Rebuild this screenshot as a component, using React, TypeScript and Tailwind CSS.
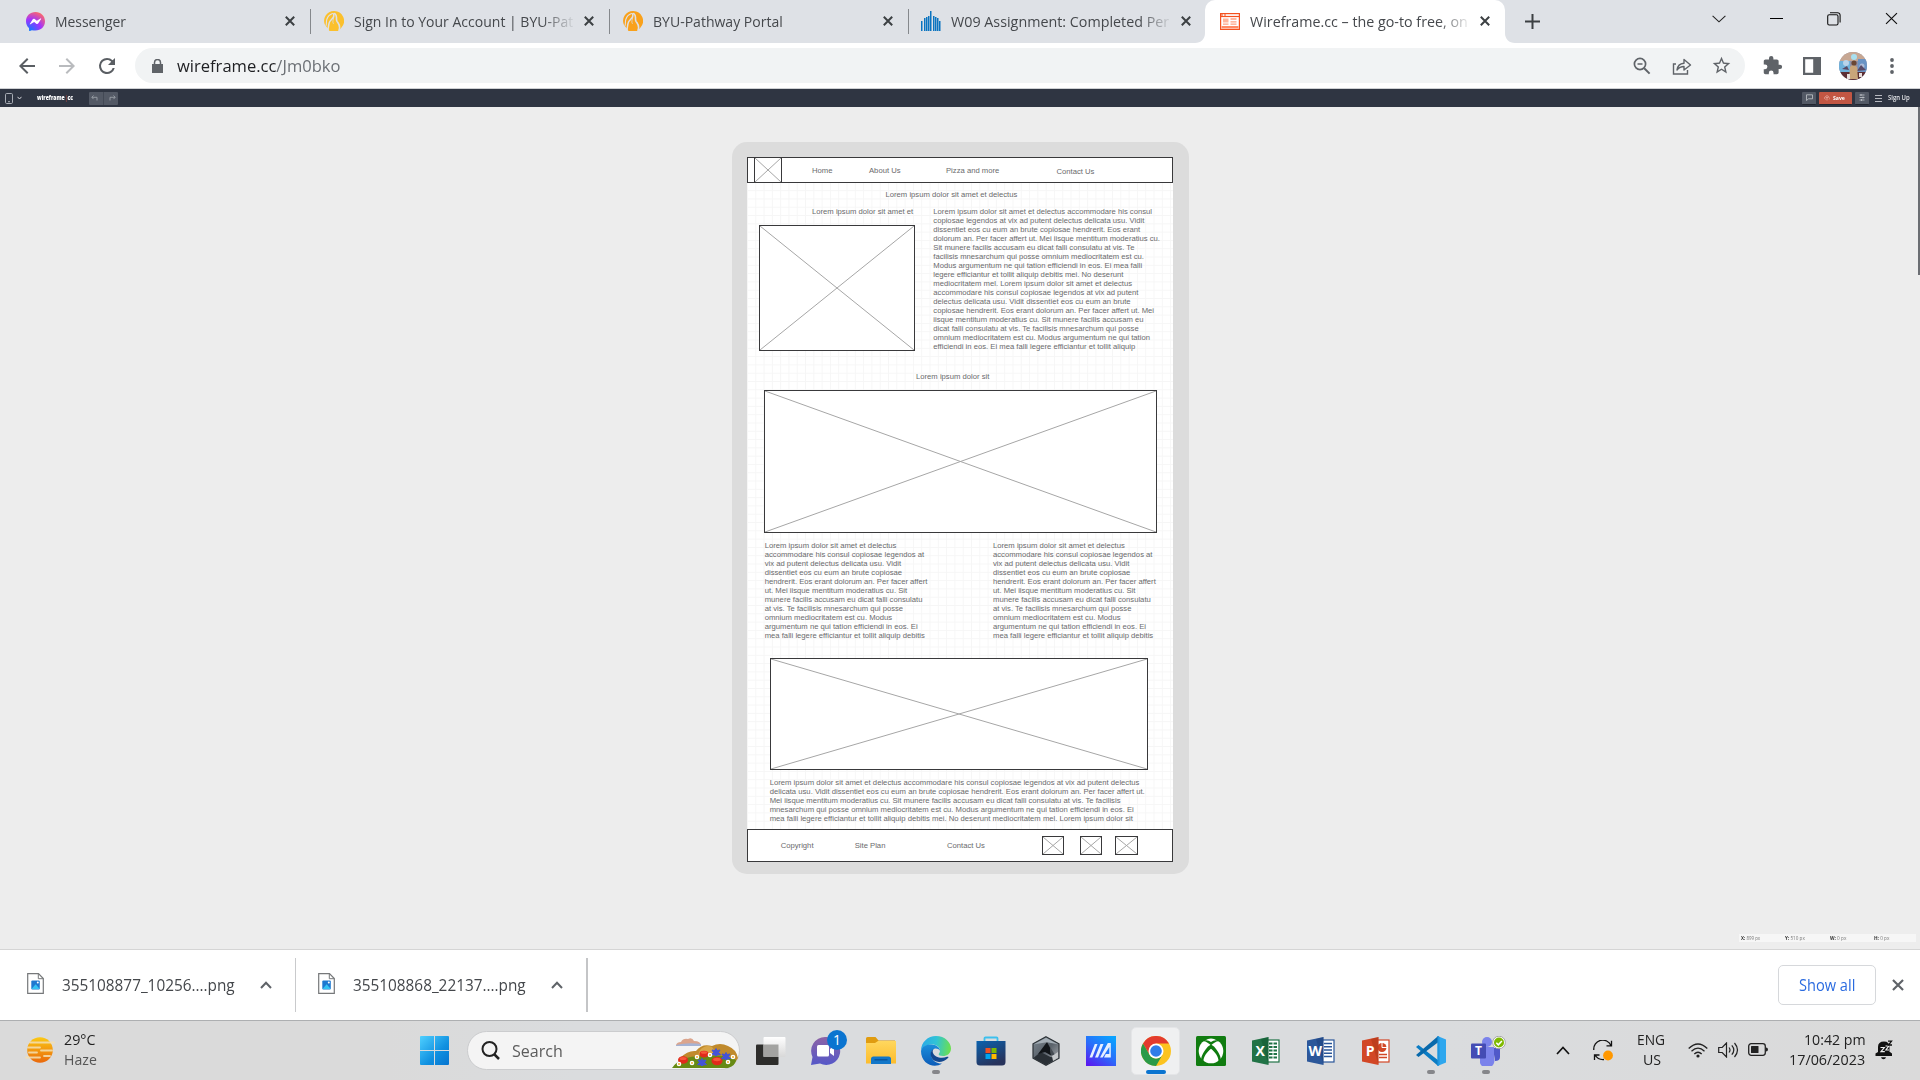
import React, { useLayoutEffect, useRef, useState } from "react";

/* Single line of text that is condensed or stretched to a given width. */
function Fit({ w, children, className = "" }: { w: number; children: React.ReactNode; className?: string }) {
  const ref = useRef<HTMLSpanElement>(null);
  const [k, setK] = useState(1);
  useLayoutEffect(() => {
    if (ref.current) setK(w / ref.current.offsetWidth);
  }, [w]);
  return (
    <span className={"block shrink-0 whitespace-nowrap " + className} style={{ width: w }}>
      <span ref={ref} className="inline-block origin-left" style={{ transform: `scaleX(${k})` }}>
        {children}
      </span>
    </span>
  );
}

/* ---------- tab strip ---------- */
function CloseX({ s = 10, c = "#3c4043", sw = 2 }: { s?: number; c?: string; sw?: number }) {
  return (
    <svg width={s} height={s} viewBox="0 0 10 10" className="shrink-0">
      <path d="M.8.8l8.4 8.4M9.2.8L.8 9.2" stroke={c} strokeWidth={sw} fill="none" />
    </svg>
  );
}

function MessengerIcon() {
  return (
    <svg width="19" height="19" viewBox="0 0 24 24">
      <defs>
        <radialGradient id="msg" cx=".2" cy="1" r="1.1">
          <stop offset="0" stopColor="#0a7cff" />
          <stop offset=".55" stopColor="#a033ff" />
          <stop offset="1" stopColor="#ff6a68" />
        </radialGradient>
      </defs>
      <path d="M12 0C5.200 0 0 4.900 0 11.600c0 3.500 1.400 6.500 3.800 8.600l.1 3.200c0 .5.500.8 1 .6l2.500-1.100c1.400.4 3 .6 4.600.6 6.800 0 12-4.900 12-11.700S18.800 0 12 0z" fill="url(#msg)" />
      <path d="M4.800 15l3.500-5.600c.6-.9 1.800-1.100 2.600-.5l2.800 2.100 4.700-2.900c.5-.3 1 .2.700.7l-3.500 5.500c-.5.900-1.800 1.100-2.600.5l-2.700-2.100-4.800 2.900c-.5.300-1-.2-.7-.6z" fill="#fff" />
    </svg>
  );
}

function PathwayIcon({ c }: { c: string }) {
  return (
    <svg width="20" height="20" viewBox="0 0 20 20">
      <path d="M10 0A9.900 9.900 0 0 1 17.500 16.500L14.500 20H5.500L4 17.500 1.200 14.500A9.900 9.900 0 0 1 10 0z" fill={c} />
      <g fill="none" stroke="#dee1e6" strokeLinecap="round">
        <path d="M8.500 2.600C6 3.500 3.800 5.500 2.800 8.500 2 11 3 13.500 1.500 16" strokeWidth="1.100" />
        <path d="M9.500 2.800C11.500 6 7 8 5.500 11c-1 2.200-1 4.500-1.500 8" strokeWidth="1.500" />
        <path d="M10.800 2.600C14 5 11.500 7.500 13 10.300c1.300 2.200 4 4.200 2 9" strokeWidth="1.600" />
        <path d="M9.800 6.500C9.500 9 8 10.500 9.300 12.500" strokeWidth=".7" />
      </g>
    </svg>
  );
}

function BarsIcon() {
  const h = [10, 13, 14, 15, 20, 15, 14, 13, 10];
  const x = [0, 3, 5, 7, 9, 12, 14, 16, 18];
  return (
    <svg width="20" height="20" viewBox="0 0 20 20">
      {h.map((v, i) => (
        <rect key={i} x={x[i]} y={20 - v} width="1.500" height={v} fill="#0a74c0" />
      ))}
    </svg>
  );
}

function WireframeIcon() {
  return (
    <svg width="20" height="17" viewBox="0 0 20 17">
      <rect x=".6" y=".6" width="18.800" height="15.800" fill="#fff" stroke="#f4511e" strokeWidth="1.200" />
      <path d="M1 3.500h18" stroke="#f4511e" strokeWidth="1.200" />
      <path d="M1 2h2M4 2h2" stroke="#f4511e" strokeWidth="1" />
      <rect x="3" y="5.500" width="5.500" height="4" fill="#ffb59b" />
      <path d="M10.500 6h6M10.500 8.800h6M3 11.200h5.500M10.500 11.200h6" stroke="#ffa182" strokeWidth="1.300" />
      <path d="M1.500 14.200h17" stroke="#ff8a65" strokeWidth="2.400" />
    </svg>
  );
}

function Tab({ icon, w, fit, title, sep }: { icon: React.ReactNode; w: string; fit: number; title: string; sep?: boolean }) {
  return (
    <div className={"flex h-full shrink-0 items-center pb-[1px] " + w}>
      <div className="flex w-[20px] justify-center">{icon}</div>
      <div className="ml-[10px] w-[220px] [mask-image:linear-gradient(to_right,#000_188px,transparent_222px)]">
        <Fit w={fit} className="text-[15px] leading-[22px] text-[#45484c]">{title}</Fit>
      </div>
      <div className="ml-[10px] flex w-[10px]">
        <CloseX />
      </div>
      {sep && <div className="ml-[15px] h-[25px] w-px bg-[#85888c]" />}
    </div>
  );
}

function TabStrip() {
  return (
    <div className="flex h-[43px] bg-[#dee1e6] text-[#3c4043]">
      <Tab w="ml-[25px] w-[299px]" fit={71.500} icon={<MessengerIcon />} title="Messenger" sep />
      <Tab w="w-[299px]" fit={219.500} icon={<PathwayIcon c="#fbc02d" />} title="Sign In to Your Account | BYU-Pat" sep />
      <Tab w="w-[298px]" fit={130} icon={<PathwayIcon c="#f9a11b" />} title="BYU-Pathway Portal" sep />
      <Tab w="w-[284px]" fit={218.500} icon={<BarsIcon />} title="W09 Assignment: Completed Per" />
      <div className="relative h-full w-[300px] shrink-0 rounded-t-[10px] bg-white pl-[15px]">
        <Tab w="w-[275px]" fit={218} icon={<WireframeIcon />} title="Wireframe.cc – the go-to free, on" />
        <svg width="10" height="10" className="absolute bottom-0 -left-[10px]"><path d="M10 0v10H0C6 10 10 6 10 0z" fill="#fff" /></svg>
        <svg width="10" height="10" className="absolute -right-[10px] bottom-0"><path d="M0 0v10h10C4 10 0 6 0 0z" fill="#fff" /></svg>
      </div>
      <div className="ml-[20px] flex items-center">
        <svg width="15" height="15" viewBox="0 0 15 15"><path d="M7.500 0v15M0 7.500h15" stroke="#3c4043" strokeWidth="2" /></svg>
      </div>
      <div className="ml-[172px] flex h-[37px] items-center">
        <svg width="14" height="8" viewBox="0 0 14 8"><path d="M.6.800l6.400 6 6.400-6" fill="none" stroke="#222" strokeWidth="1.100" /></svg>
        <div className="ml-[44px] h-px w-[13px] bg-black" />
        <svg width="14" height="14" viewBox="0 0 14 14" className="ml-[44px]">
          <rect x=".7" y="2.700" width="10.300" height="10.300" rx="1.500" fill="none" stroke="#111" strokeWidth="1.100" />
          <path d="M3 .700h7.500a2.500 2.500 0 0 1 2.600 2.500V10.500" fill="none" stroke="#111" strokeWidth="1.100" />
        </svg>
        <span className="ml-[44px]"><CloseX s={13} c="#111" sw={0.9} /></span>
      </div>
    </div>
  );
}

/* ---------- address bar ---------- */
function Toolbar() {
  return (
    <div className="flex h-[46px] items-center border-b border-[#cfd1d4] bg-white">
      <svg width="24" height="24" viewBox="0 0 24 24" className="ml-[15px]"><path d="M20 11H7.830l5.590-5.590L12 4l-8 8 8 8 1.410-1.410L7.830 13H20v-2z" fill="#5a5e63" /></svg>
      <svg width="24" height="24" viewBox="0 0 24 24" className="ml-[16px]"><path d="M12 4l-1.410 1.410L16.170 11H4v2h12.170l-5.580 5.590L12 20l8-8z" fill="#b9bbbe" /></svg>
      <svg width="24" height="24" viewBox="0 0 24 24" className="ml-[16px]"><path d="M17.650 6.350A7.960 7.960 0 0 0 12 4a8 8 0 1 0 7.730 10h-2.080A6 6 0 1 1 12 6c1.660 0 3.140.690 4.220 1.780L13 11h7V4l-2.350 2.350z" fill="#5a5e63" /></svg>
      <div className="ml-[16px] flex h-[35px] w-[1610px] items-center rounded-full bg-[#f1f3f4] pl-[17px]">
        <svg width="11" height="14" viewBox="0 0 11 14"><path d="M0 5h11v9H0z" fill="#5f6368" /><path d="M2.500 6V3.500a3 3 0 0 1 6 0V6" fill="none" stroke="#5f6368" strokeWidth="1.500" /></svg>
        <Fit w={163.500} className="ml-[14px] text-[17px] leading-[24px] text-[#6c7075]"><span className="text-[#202124]">wireframe.cc</span>/Jm0bko</Fit>
        <svg width="18" height="18" viewBox="0 0 18 18" className="ml-[1292px]" fill="none" stroke="#5f6368">
          <circle cx="7" cy="7" r="5.600" strokeWidth="1.700" /><path d="M11.200 11.200l5.400 5.400" strokeWidth="2" /><path d="M4.500 7h5" strokeWidth="1.500" />
        </svg>
        <svg width="20" height="18" viewBox="0 0 20 18" className="ml-[21px]" fill="none" stroke="#5f6368" strokeWidth="1.400">
          <path d="M4 7H1.500v10h14v-4" /><path d="M5 13c.5-4 3-6.500 7-6.800V2.500L18.500 8 12 13V9.500c-3 0-5 1-7 3.500z" strokeLinejoin="round" />
        </svg>
        <svg width="21" height="21" viewBox="0 0 24 24" className="ml-[19px]"><path d="M22 9.240l-7.190-.620L12 2 9.190 8.630 2 9.240l5.460 4.730L5.820 21 12 17.270 18.180 21l-1.630-7.030L22 9.240zM12 15.400l-3.760 2.270 1-4.280-3.320-2.880 4.380-.380L12 6.100l1.710 4.040 4.380.380-3.320 2.880 1 4.280L12 15.400z" fill="#5f6368" /></svg>
      </div>
      <svg width="21" height="21" viewBox="0 0 24 24" className="ml-[17px]"><path d="M20.500 11H19V7c0-1.100-.9-2-2-2h-4V3.500a2.500 2.500 0 0 0-5 0V5H4c-1.100 0-1.990.9-1.990 2v3.800H3.500a2.700 2.700 0 0 1 0 5.400H2V20c0 1.100.9 2 2 2h3.800v-1.500a2.700 2.700 0 0 1 5.400 0V22H17c1.100 0 2-.9 2-2v-4h1.500a2.500 2.500 0 0 0 0-5z" fill="#5f6368" /></svg>
      <svg width="18" height="18" viewBox="0 0 18 18" className="ml-[20px]"><path d="M0 0h18v18H0zM2.200 2.200v13.600h8V2.200z" fill="#5f6368" fillRule="evenodd" /></svg>
      <svg width="28" height="28" viewBox="0 0 28 28" className="ml-[18px]">
        <clipPath id="av"><circle cx="14" cy="14" r="14" /></clipPath>
        <g clipPath="url(#av)">
          <rect width="28" height="28" fill="#8f8fa6" />
          <rect width="28" height="9" fill="#c7a793" />
          <path d="M0 9h11v12H0z" fill="#6fb2dc" /><path d="M19 7h9v13h-9z" fill="#6a93c4" />
          <circle cx="15" cy="5" r="3" fill="#a8e0f0" /><circle cx="7" cy="11" r="3" fill="#b9d3ea" /><circle cx="23" cy="14" r="2.500" fill="#aebbd6" />
          <path d="M3 17l5-3 2 4zM18 19l4-6 5 5z" fill="#5a4a66" />
          <path d="M0 20h28v8H0z" fill="#5d2f35" />
          <path d="M11 15q3-4 7 0l1 12h-9z" fill="#c9a57a" /><circle cx="15" cy="11" r="2.600" fill="#6a4634" />
          <path d="M8 22h3v5H8zM20 21h3v4h-3z" fill="#e8e0de" />
        </g>
      </svg>
      <svg width="4" height="16" viewBox="0 0 4 16" className="ml-[23px]" fill="#5f6368"><circle cx="2" cy="2" r="1.900" /><circle cx="2" cy="8" r="1.900" /><circle cx="2" cy="14" r="1.900" /></svg>
    </div>
  );
}

/* ---------- wireframe editor ---------- */
function EditorBar() {
  return (
    <div className="flex h-[18px] items-center bg-[#2f3542] text-white">
      <svg width="8" height="11" viewBox="0 0 8 11" className="ml-[5px]"><rect x=".5" y=".5" width="7" height="10" rx="1.200" fill="none" stroke="#a9adb5" /><path d="M3 8.700h2" stroke="#a9adb5" /></svg>
      <svg width="5" height="4" viewBox="0 0 5 4" className="ml-[4px]"><path d="M.5.800L2.500 3 4.500.800" stroke="#d5d7db" fill="none" /></svg>
      <Fit w={36} className="ml-[15px] text-[6.500px] leading-[10px] font-extrabold">wireframe<span className="font-normal text-[#e2543d]">|</span>cc</Fit>
      <div className="ml-[16px] flex h-[13px] w-[29px] items-center justify-around rounded-[1px] bg-[#535965]">
        <svg width="7" height="6" viewBox="0 0 7 6"><path d="M2.500.500L.800 2.300l1.700 1.800M1 2.300h5V5.500" stroke="#9da1a9" fill="none" strokeWidth=".9" /></svg>
        <div className="h-full w-px bg-[#434955]" />
        <svg width="7" height="6" viewBox="0 0 7 6"><path d="M4.500.500L6.200 2.300 4.500 4.100M6 2.300H1V5.500" stroke="#9da1a9" fill="none" strokeWidth=".9" /></svg>
      </div>
      <div className="ml-[1684px] flex h-[13px] w-[14px] items-center justify-center rounded-[1px] border-b border-[#22262f] bg-[#535965]">
        <svg width="7" height="7" viewBox="0 0 7 7"><path d="M.500.800h6v4h-4L.500 6.500z" stroke="#c3c6cb" fill="none" strokeWidth=".8" /></svg>
      </div>
      <div className="ml-[3px] flex h-[13px] w-[33px] items-center rounded-[1px] border-b border-[#22262f] bg-[#c25643] pl-[5px]">
        <svg width="6" height="6" viewBox="0 0 6 6"><path d="M3 5.500V2M1.800 3L3 1.800 4.200 3M1.500 4.500a1.700 1.700 0 0 1 0-3 2 2 0 0 1 3.500 1 1.200 1.200 0 0 1 0 2" stroke="#efb5aa" fill="none" strokeWidth=".7" /></svg>
        <Fit w={12} className="ml-[3px] text-[6px] leading-[10px] font-bold">Save</Fit>
      </div>
      <div className="ml-[3px] flex h-[13px] w-[14px] items-center justify-center rounded-[1px] border-b border-[#22262f] bg-[#535965]">
        <svg width="6" height="7" viewBox="0 0 6 7"><path d="M.500 1h5M.500 3.500h5M.500 6h5M2 0v2M4 2.500v2M2.500 5v2" stroke="#c3c6cb" strokeWidth=".8" /></svg>
      </div>
      <svg width="7" height="7" viewBox="0 0 7 7" className="ml-[6px]"><path d="M0 .500h7M0 3.500h7M0 6.500h7" stroke="#c8cad0" strokeWidth=".9" /></svg>
      <Fit w={22} className="ml-[6px] text-[6.500px] leading-[10px] font-semibold text-[#e4e5e8]">Sign Up</Fit>
    </div>
  );
}

function ImageBox({ className }: { className: string }) {
  return (
    <div className={"absolute border border-[#39393b] bg-white " + className}>
      <svg width="100%" height="100%" viewBox="0 0 100 100" preserveAspectRatio="none" className="block">
        <path d="M0 0L100 100M100 0L0 100" stroke="#a6a6a6" strokeWidth="1" vectorEffect="non-scaling-stroke" />
      </svg>
    </div>
  );
}

function Note({ className, lines }: { className: string; lines: string[] }) {
  return (
    <div className={"absolute text-[7.680px] leading-[9px] whitespace-nowrap " + className}>
      {lines.map((l, i) => (
        <div key={i}>{l}</div>
      ))}
    </div>
  );
}

const INTRO = [
  "Lorem ipsum dolor sit amet et delectus accommodare his consul",
  "copiosae legendos at vix ad putent delectus delicata usu. Vidit",
  "dissentiet eos cu eum an brute copiosae hendrerit. Eos erant",
  "dolorum an. Per facer affert ut. Mei iisque mentitum moderatius cu.",
  "Sit munere facilis accusam eu dicat falli consulatu at vis. Te",
  "facilisis mnesarchum qui posse omnium mediocritatem est cu.",
  "Modus argumentum ne qui tation efficiendi in eos. Ei mea falli",
  "legere efficiantur et tollit aliquip debitis mei. No deserunt",
  "mediocritatem mel. Lorem ipsum dolor sit amet et delectus",
  "accommodare his consul copiosae legendos at vix ad putent",
  "delectus delicata usu. Vidit dissentiet eos cu eum an brute",
  "copiosae hendrerit. Eos erant dolorum an. Per facer affert ut. Mei",
  "iisque mentitum moderatius cu. Sit munere facilis accusam eu",
  "dicat falli consulatu at vis. Te facilisis mnesarchum qui posse",
  "omnium mediocritatem est cu. Modus argumentum ne qui tation",
  "efficiendi in eos. Ei mea falli legere efficiantur et tollit aliquip",
];
const COLUMN = [
  "Lorem ipsum dolor sit amet et delectus",
  "accommodare his consul copiosae legendos at",
  "vix ad putent delectus delicata usu. Vidit",
  "dissentiet eos cu eum an brute copiosae",
  "hendrerit. Eos erant dolorum an. Per facer affert",
  "ut. Mei iisque mentitum moderatius cu. Sit",
  "munere facilis accusam eu dicat falli consulatu",
  "at vis. Te facilisis mnesarchum qui posse",
  "omnium mediocritatem est cu. Modus",
  "argumentum ne qui tation efficiendi in eos. Ei",
  "mea falli legere efficiantur et tollit aliquip debitis",
];
const WIDE = [
  "Lorem ipsum dolor sit amet et delectus accommodare his consul copiosae legendos at vix ad putent delectus",
  "delicata usu. Vidit dissentiet eos cu eum an brute copiosae hendrerit. Eos erant dolorum an. Per facer affert ut.",
  "Mei iisque mentitum moderatius cu. Sit munere facilis accusam eu dicat falli consulatu at vis. Te facilisis",
  "mnesarchum qui posse omnium mediocritatem est cu. Modus argumentum ne qui tation efficiendi in eos. Ei",
  "mea falli legere efficiantur et tollit aliquip debitis mei. No deserunt mediocritatem mel. Lorem ipsum dolor sit",
];

function Canvas() {
  return (
    <div className="relative h-[705px] w-[426px] bg-white bg-[linear-gradient(to_right,#f6f6f6_1px,transparent_1px),linear-gradient(to_bottom,#f6f6f6_1px,transparent_1px)] bg-[size:8.300px_8.300px] font-['Liberation_Sans',Arial,sans-serif] text-[#6a6a6c]">
      <div className="absolute top-0 left-0 h-[26px] w-[426px] border border-[#39393b] bg-white" />
      <ImageBox className="top-0 left-[7px] h-[26px] w-[28px]" />
      <Note className="top-[9px] left-[65px]" lines={["Home"]} />
      <Note className="top-[9px] left-[122px]" lines={["About Us"]} />
      <Note className="top-[9px] left-[199px]" lines={["Pizza and more"]} />
      <Note className="top-[10px] left-[309.500px]" lines={["Contact Us"]} />
      <Note className="top-[33px] left-[138.500px]" lines={["Lorem ipsum dolor sit amet et delectus"]} />
      <Note className="top-[50px] left-[65px]" lines={["Lorem ipsum dolor sit amet et"]} />
      <ImageBox className="top-[68px] left-[12px] h-[126px] w-[156px]" />
      <Note className="top-[50px] left-[186.300px]" lines={INTRO} />
      <Note className="top-[215px] left-[169px]" lines={["Lorem ipsum dolor sit"]} />
      <ImageBox className="top-[233px] left-[17px] h-[143px] w-[393px]" />
      <Note className="top-[384px] left-[17.700px]" lines={COLUMN} />
      <Note className="top-[384px] left-[246px]" lines={COLUMN} />
      <ImageBox className="top-[501px] left-[23px] h-[112px] w-[378px]" />
      <Note className="top-[621px] left-[22.700px]" lines={WIDE} />
      <div className="absolute top-[672px] left-0 h-[33px] w-[426px] border border-[#39393b] bg-white" />
      <Note className="top-[684px] left-[33.700px]" lines={["Copyright"]} />
      <Note className="top-[684px] left-[107.700px]" lines={["Site Plan"]} />
      <Note className="top-[684px] left-[200px]" lines={["Contact Us"]} />
      <ImageBox className="top-[679px] left-[295px] h-[19px] w-[22px]" />
      <ImageBox className="top-[679px] left-[333px] h-[19px] w-[22px]" />
      <ImageBox className="top-[679px] left-[368px] h-[19px] w-[23px]" />
    </div>
  );
}

function Editor() {
  return (
    <div className="relative flex h-[842px] justify-center bg-[#ededed] pt-[35px]">
      <div className="flex h-[732px] w-[457px] justify-center rounded-[15px] bg-[#dcdcdc] pt-[15px]">
        <Canvas />
      </div>
      <div className="absolute top-0 right-0 h-[168px] w-[2px] bg-[#6b6e73]" />
      <div className="absolute right-[4px] bottom-[7px] flex h-[8px] w-[177px] items-center bg-[#f6f6f6] pl-[2px] text-[5px] leading-[8px] text-[#777]">
        <Fit w={19.500} className="mr-[24.500px]"><b className="text-[#333]">X:</b> 899 px</Fit>
        <Fit w={19.500} className="mr-[25px]"><b className="text-[#333]">Y:</b> 510 px</Fit>
        <Fit w={16} className="mr-[28px]"><b className="text-[#333]">W:</b> 0 px</Fit>
        <Fit w={15}><b className="text-[#333]">H:</b> 0 px</Fit>
      </div>
    </div>
  );
}

/* ---------- downloads shelf ---------- */
function Download({ name }: { name: string }) {
  return (
    <>
      <svg width="17" height="21" viewBox="0 0 17 21" className="-mt-[3px]">
        <path d="M.7.700h10.800l4.800 4.800v14.800H.7z" fill="#fff" stroke="#76787a" strokeWidth="1.200" /><path d="M11.300.700v5h5" fill="none" stroke="#76787a" />
        <rect x="4.300" y="7.500" width="8.500" height="9" rx="1" fill="#1e78d0" /><path d="M4.500 16l4.200-4.800 4 4.800z" fill="#35c3f3" /><circle cx="10.800" cy="9.500" r="1" fill="#fff" />
      </svg>
      <Fit w={172.500} className="ml-[17.500px] text-[16px] leading-[24px] text-[#44474b]">{name}</Fit>
      <svg width="12" height="8" viewBox="0 0 12 8" className="ml-[26px]"><path d="M1 7l5-5.200L11 7" fill="none" stroke="#5f6368" strokeWidth="2" /></svg>
    </>
  );
}

function Shelf() {
  return (
    <div className="flex h-[71px] items-center border-t border-[#d5d5d5] bg-white">
      <div className="flex w-[295px] items-center pl-[27px]"><Download name="355108877_10256....png" /></div>
      <div className="h-[54px] w-px bg-[#c9cacc]" />
      <div className="flex w-[290px] items-center pl-[22px]"><Download name="355108868_22137....png" /></div>
      <div className="h-[54px] w-[2px] bg-[#c4c5c7]" />
      <div className="mt-[-1px] ml-auto flex h-[40px] w-[98px] items-center justify-center rounded-[5px] border border-[#d6d8db] text-[#2a6be0]">
        <Fit w={56.500} className="text-[15.500px] leading-[22px]">Show all</Fit>
      </div>
      <div className="mr-[16px] ml-[16px] flex"><CloseX s={12} c="#5f6368" sw={1.8} /></div>
    </div>
  );
}

/* ---------- taskbar ---------- */
function Flowers() {
  const reds = [[683, 1060, 5], [704, 1054, 4.500], [717, 1061, 5.500]];
  const blues = [[716, 1052], [702, 1062], [726, 1056]];
  const whites = [[679, 1064], [692, 1063], [697, 1057], [710, 1055], [728, 1062], [733, 1057]];
  return (
    <svg width="66" height="30" viewBox="672 1038 66 30" className="shrink-0">
      <path d="M676 1045q1-3 5-3 2-4 7-3 4-2 6 2 7 0 7 5z" fill="#dba58d" /><path d="M676 1045q12-3 25-1v2h-25z" fill="#a5b3d4" />
      <path d="M680 1058q8-8 16-7 6-8 16-5 8-4 16 0 8 3 10 12l-4 6h-50z" fill="#c08a2c" />
      <path d="M700 1050q6-6 12-3l6 8h-20z" fill="#d8a648" />
      <path d="M672 1068q8-12 30-12 24-2 34 4 0 5-8 8z" fill="#668a14" />
      {reds.map(([x, y, r], i) => (
        <g key={i}><ellipse cx={x} cy={y} rx={r} ry={r * 0.75} fill="#e12a1c" /><ellipse cx={x} cy={y - 1.500} rx={r * 0.7} ry={r * 0.3} fill="#f8583a" /></g>
      ))}
      {blues.map(([x, y], i) => (
        <path key={i} d={`M${x - 4} ${y - 2}l3 .500 1-2 1 2 3-.500-1.500 2.500 2 2-3.500.500-1 1-1-1-3.500-.500 2-2z`} fill="#4453d6" stroke="#4453d6" />
      ))}
      {whites.map(([x, y], i) => (
        <g key={i}><circle cx={x} cy={y} r="2.300" fill="#fff" /><circle cx={x} cy={y} r=".9" fill="#f2a516" /></g>
      ))}
    </svg>
  );
}

function Cell({ children, run }: { children: React.ReactNode; run?: boolean }) {
  return (
    <div className="relative flex h-full w-[55px] shrink-0 items-center justify-center">
      {children}
      {run && <div className="absolute bottom-[6px] left-[24px] h-[4px] w-[8px] rounded-full bg-[#85868a]" />}
    </div>
  );
}

function OfficeIcon({ c, dark, letter, children }: { c: string; dark: string; letter: string; children: React.ReactNode }) {
  return (
    <svg width="28" height="28" viewBox="0 0 28 28">
      <rect x="14" y="3" width="13" height="22" fill="#fff" stroke={c} strokeWidth="1.200" />
      {children}
      <path d="M0 3.500L16.500 0v28L0 24.500z" fill={c} /><path d="M9 2l7.500-2v28z" fill={dark} opacity=".35" />
      <text x="8.200" y="19" textAnchor="middle" fontSize="14" fontWeight="700" fill="#fff" fontFamily="Open Sans">{letter}</text>
    </svg>
  );
}

function TaskView() {
  return (
    <svg width="30" height="28" viewBox="0 0 30 28">
      <defs><linearGradient id="tv" x2="0" y2="1"><stop stopColor="#fff" /><stop offset="1" stopColor="#d8d8d8" /></linearGradient></defs>
      <rect x="0" y="7.500" width="22.500" height="20.500" rx="1" fill="#2d2d2b" /><rect x="7.500" y="0" width="22" height="20" rx="1" fill="url(#tv)" />
      <rect x="7.500" y="7.500" width="15" height="12.500" fill="#a3a3a1" />
    </svg>
  );
}
function Chat() {
  return (
    <svg width="40" height="40" viewBox="0 0 40 40" className="-mt-[8px] ml-[4px]">
      <defs><linearGradient id="ch" x2="0" y2="1"><stop stopColor="#8d63a6" /><stop offset="1" stopColor="#5558c8" /></linearGradient></defs>
      <path d="M17 10a14 14 0 1 1-5 26.500L3 38l1.500-8A14 14 0 0 1 17 10z" fill="url(#ch)" />
      <rect x="9" y="18" width="12" height="11.500" rx="1.500" fill="#fff" /><path d="M22 22l4-3v10l-4-3z" fill="#fff" />
      <circle cx="29" cy="13" r="10" fill="#0a74d0" />
      <text x="29" y="18" textAnchor="middle" fontSize="14" fill="#fff" fontFamily="Open Sans">1</text>
    </svg>
  );
}
function Folder() {
  return (
    <svg width="30" height="27" viewBox="0 0 30 27">
      <path d="M0 1.500Q0 0 1.500 0h8l3 3.500H29V14H0z" fill="#e09c10" />
      <defs><linearGradient id="fo" x2="0" y2="1"><stop stopColor="#ffd75e" /><stop offset="1" stopColor="#fcbc2c" /></linearGradient></defs>
      <path d="M0 6h9l3-2h18v22.500H0z" fill="url(#fo)" />
      <path d="M5 27v-5q0-2.500 2.500-2.500h15Q25 19.500 25 22v5z" fill="#1277c9" /><path d="M8.500 22.800h13" stroke="#0b4f94" strokeWidth="1.200" />
    </svg>
  );
}
function Edge() {
  return (
    <svg width="30" height="30" viewBox="0 0 30 30">
      <defs>
        <linearGradient id="e1" x1="0" y1=".3" x2="1" y2=".4"><stop stopColor="#2aa9e8" /><stop offset=".5" stopColor="#30c3d6" /><stop offset="1" stopColor="#6be050" /></linearGradient>
        <linearGradient id="e2" x2="0" y2="1"><stop stopColor="#1b8fdc" /><stop offset="1" stopColor="#0c5cb8" /></linearGradient>
      </defs>
      <path d="M0 15C0 6 7 0 15 0c9 0 15 6.500 15 12.500 0 5-4 7.500-8 7.500-3 0-4.600-1-4.300-2 .7-1 1.300-1.800 1.300-3.500 0-3.500-3.500-6-8-6C5.500 8.500 1 11 0 15z" fill="url(#e1)" />
      <path d="M0 15c1-5 5.500-6.500 10-6.500 5 0 9 3 9 6.300-1.500-2-4-2.800-6-1.800-3 1.500-3.500 5-2.500 8 1.500 4.500 6.500 7 10.500 6.500-8 5.500-21 .5-21-12.500z" fill="url(#e2)" />
      <path d="M12.500 13c-3 2-3.500 5-2 8.500 2.500 5.500 11 6 16.500.5 1-1 .2-1.700-1-1.200-6 2.500-12.500.2-14-3.800-.5-1.500-.3-3 .5-4z" fill="#13488f" />
    </svg>
  );
}
function Store() {
  return (
    <svg width="30" height="30" viewBox="0 0 30 30">
      <defs><linearGradient id="st" x2=".5" y2="1"><stop stopColor="#0b62ae" /><stop offset="1" stopColor="#27335c" /></linearGradient></defs>
      <path d="M8.500 7V2.200Q8.500 1.500 9.500 1.500h11q1 0 1 .7V7" fill="none" stroke="#3cc0ee" strokeWidth="1.800" />
      <path d="M.5 5h29v21q0 3.500-3.500 3.500H4Q.5 29.500.5 26z" fill="url(#st)" />
      <path d="M9.500 12h5v5h-5z" fill="#f25022" /><path d="M15.500 12h5v5h-5z" fill="#7fba00" /><path d="M9.500 18h5v5h-5z" fill="#00a4ef" /><path d="M15.500 18h5v5h-5z" fill="#ffb900" />
    </svg>
  );
}
function Armoury() {
  return (
    <svg width="28" height="30" viewBox="0 0 28 30">
      <defs><linearGradient id="ar" x2="1" y2="1"><stop stopColor="#7d8890" /><stop offset=".5" stopColor="#59616a" /><stop offset="1" stopColor="#b5b8bc" /></linearGradient></defs>
      <path d="M14 .8l13 7v14.400l-13 7-13-7V7.800z" fill="url(#ar)" stroke="#2d3338" strokeWidth="1.200" />
      <path d="M1.500 22l7-6 10 5 7.500 1-12 7z" fill="#2a3036" />
      <path d="M15 6L6 18l7-2 6 3.500-1-8z" fill="#111519" /><path d="M15 6l8 13-4 .5-1-8z" fill="#444b52" />
      <path d="M2 8.200L14 1.800l12 6.400-11-2z" fill="#a3adb5" /><path d="M20 20l6-4v6l-5 3z" fill="#c5c8cb" />
    </svg>
  );
}
function MyAsus() {
  return (
    <svg width="30" height="30" viewBox="0 0 30 30">
      <defs><linearGradient id="ma" x1=".1" y1="1" x2=".8" y2="0"><stop stopColor="#5a18f0" /><stop offset=".5" stopColor="#2b6bfa" /><stop offset="1" stopColor="#0aa2ff" /></linearGradient></defs>
      <rect width="30" height="30" fill="url(#ma)" />
      <path d="M3.500 21.500h2.800L11.500 8H8.800zM9 21.500h3L17.500 8h-3zM14 21.500h2.600L23.300 11v7h-3.500l-1.800 3.500h6.800V7h-3z" fill="#e6f0ff" />
    </svg>
  );
}
function Chrome() {
  return (
    <svg width="30" height="30" viewBox="0 0 48 48">
      <circle cx="24" cy="24" r="24" fill="#fcc31f" />
      <path d="M3.200 12A24 24 0 0 1 44.800 12H24L13.600 30z" fill="#e33b2e" />
      <path d="M3.200 12l10.400 18A12 12 0 0 0 34.400 30L24 48A24 24 0 0 1 3.200 12z" fill="#2a9a48" />
      <circle cx="24" cy="24" r="12" fill="#fff" /><circle cx="24" cy="24" r="9.300" fill="#2f7de9" />
    </svg>
  );
}
function Xbox() {
  return (
    <svg width="30" height="30" viewBox="0 0 30 30">
      <rect width="30" height="30" rx="1.500" fill="#107c10" />
      <circle cx="15" cy="15" r="12.300" fill="#fff" />
      <path d="M15 9.300C12 6.500 8.800 4.600 6.800 5.300L8 3.500q7-3 14 0l1.200 1.800c-2-.7-5.200 1.200-8.200 4z" fill="#107c10" />
      <path d="M12 10.500C8 15 5 20 5.200 24l2.300 1.300C7.200 21 11 16 15 12.800 19 16 22.800 21 22.500 25.300l2.300-1.300C25 20 22 15 18 10.500l-3-2z" fill="#107c10" />
      <path d="M9 4.500Q12 3.800 15 6q3-2.200 6-1.500-3-2-6-2T9 4.500z" fill="#fff" />
    </svg>
  );
}
function VSCode() {
  return (
    <svg width="30" height="30" viewBox="0 0 30 30">
      <path d="M21.500 0L30 3.500v23L21.500 30z" fill="#2ea7ee" /><path d="M0 11l2.500-2 20 15.500V30q-1-.3-1.500-1z" fill="#0b7cc4" />
      <path d="M0 19l2.500 2L22.500 6V0q-1 .3-1.500 1z" fill="#0869ab" /><path d="M21.500 0l2 1v28l-2 1V23z" fill="#1f95de" />
    </svg>
  );
}
function Teams() {
  return (
    <svg width="36" height="30" viewBox="0 0 36 30" className="ml-[7px]">
      <circle cx="16" cy="6" r="5" fill="#7b83eb" /><path d="M22 12h7v9q0 4-5 4z" fill="#5059c9" />
      <path d="M9 11h14v11a7 7 0 0 1-14 5z" fill="#7b83eb" /><rect x="0" y="7.500" width="15" height="15" rx="1" fill="#444cb4" />
      <text x="7.500" y="19" textAnchor="middle" fontSize="12" fontWeight="700" fill="#fff" fontFamily="Open Sans">T</text>
      <circle cx="28" cy="6.500" r="6.300" fill="#fff" stroke="#8a8a8a" strokeWidth=".7" /><circle cx="28" cy="6.500" r="5" fill="#7fb900" /><path d="M25.300 6.800l2 2 3.600-3.800" fill="none" stroke="#fff" strokeWidth="1.500" />
    </svg>
  );
}

function Weather() {
  return (
    <svg width="30" height="26" viewBox="0 0 30 26" className="-mt-[2px] ml-[25px]">
      <defs><linearGradient id="we" x2="0" y2="1"><stop stopColor="#fbc914" /><stop offset="1" stopColor="#e9680c" /></linearGradient></defs>
      <circle cx="15" cy="13" r="12.800" fill="url(#we)" />
      <path d="M5 5.500h24M3 10.500h12M16 13.500h11M4 15.500h8M1 20.500h14M19 19h6" stroke="#f3e0b4" strokeWidth="1.800" strokeLinecap="round" opacity=".85" />
    </svg>
  );
}

function Tray() {
  return (
    <>
      <svg width="14" height="9" viewBox="0 0 14 9" className="ml-[43px]"><path d="M1 8l6-6.500L13 8" fill="none" stroke="#111" strokeWidth="1.700" /></svg>
      <svg width="20" height="21" viewBox="0 0 20 21" className="ml-[23px]" fill="none" stroke="#111" strokeWidth="1.300">
        <path d="M.8 10A9 9 0 0 1 18 5.500M18.500.800v5h-5M1.500 20v-5h5M2 15q3 5 9 4.500" /><circle cx="15" cy="15.500" r="4.900" fill="#ff9800" stroke="none" />
      </svg>
      <div className="-mt-[3px] ml-[24px] flex w-[29px] flex-col items-center text-[15px] leading-[20px] text-[#222]">
        <Fit w={28.500}>ENG</Fit>
        <Fit w={18}>US</Fit>
      </div>
      <svg width="20" height="15" viewBox="0 0 20 15" className="-mt-[1px] ml-[22px]" fill="none" stroke="#222" strokeWidth="1.300">
        <path d="M.7 5.500q9.300-9 18.600 0M3.500 8.300q6.500-6.300 13 0M6.300 11q3.700-3.600 7.400 0" /><circle cx="10" cy="13" r="1.600" fill="#222" stroke="none" />
      </svg>
      <svg width="21" height="16" viewBox="0 0 21 16" className="-mt-[2px] ml-[10px]" fill="none" stroke="#222" strokeWidth="1.200">
        <path d="M.7 5.500h3.500L8.500 1v14l-4.300-4.500H.7zM11 5.500q2 2.500 0 5M13.800 3.300q4 4.700 0 9.400M16.500 1q6 7 0 14" />
      </svg>
      <svg width="20" height="13" viewBox="0 0 20 13" className="-mt-[2px] ml-[9px]">
        <rect x=".7" y=".7" width="16.600" height="11.600" rx="2.500" fill="none" stroke="#222" strokeWidth="1.300" /><rect x="3" y="3" width="7.500" height="7" rx=".5" fill="#222" /><path d="M18 4.500q2 0 2 2t-2 2z" fill="#222" />
      </svg>
      <div className="-mt-[4px] ml-[20px] flex w-[77px] flex-col items-end text-[15px] leading-[20px] text-[#222]">
        <Fit w={61.500}>10:42 pm</Fit>
        <Fit w={76.500}>17/06/2023</Fit>
      </div>
      <svg width="22" height="20" viewBox="0 0 22 20" className="-mt-[2px] ml-[10px]">
        <path d="M3 15V7q0-5.500 6-5.500 5.500 0 5.500 5.500v8z" fill="#111" /><path d="M.5 13.500L3 12h12l2 1.500V16H.500z" fill="#111" /><path d="M6 17.300h5q-.5 2-2.500 2t-2.500-2z" fill="#111" />
        <path d="M5.500 7.500h3.800L6 11.700h3.800M10.500 6h3.300l-2.900 4h3.300" stroke="#eee" strokeWidth="1.200" fill="none" /><path d="M13 1.200h3.500L13.500 5H17" stroke="#111" strokeWidth="1.300" fill="none" />
      </svg>
    </>
  );
}

function Taskbar() {
  return (
    <div className="flex h-[60px] items-center border-t border-[#adafb1] bg-[linear-gradient(to_right,#dadada,#dadada_20%,#dadcde_30%,#dadcde_75%,#dadada)]">
      <Weather />
      <div className="-mt-[4px] ml-[9px] flex w-[356px] flex-col text-[15px] leading-[20px]">
        <Fit w={31.500} className="text-[#1f1f1f]">29°C</Fit>
        <Fit w={33} className="text-[#555]">Haze</Fit>
      </div>
      <svg width="29" height="29" viewBox="0 0 29 29">
        <defs><linearGradient id="win" x2="1" y2="1"><stop stopColor="#4fd0ff" /><stop offset=".6" stopColor="#1090e0" /><stop offset="1" stopColor="#0674cf" /></linearGradient></defs>
        <path d="M1 0h13v14H0V1q0-1 1-1zM15 0h13q1 0 1 1v13H15zM0 15h14v14H1q-1 0-1-1zM15 15h14v13q0 1-1 1H15z" fill="url(#win)" />
      </svg>
      <div className="ml-[18px] flex h-[39px] w-[273px] items-center rounded-full border border-[#cbccce] bg-[#f4f4f4] pl-[13px]">
        <svg width="19" height="19" viewBox="0 0 19 19" fill="none" stroke="#222" strokeWidth="2"><circle cx="8.500" cy="8" r="7" /><path d="M13 13l5 5" strokeWidth="2.500" /></svg>
        <Fit w={51} className="ml-[12px] text-[17px] leading-[24px] text-[#5c5c5c]">Search</Fit>
        <span className="mt-[5px] ml-[109px] flex"><Flowers /></span>
      </div>
      <div className="ml-[3px] flex h-full items-center">
        <Cell><TaskView /></Cell>
        <Cell><Chat /></Cell>
        <Cell><Folder /></Cell>
        <Cell run><Edge /></Cell>
        <Cell><Store /></Cell>
        <Cell><Armoury /></Cell>
        <Cell><MyAsus /></Cell>
        <div className="relative mx-[3px] flex h-[48px] w-[49px] shrink-0 items-center justify-center rounded-[5px] border border-[#e4e5e7] bg-[#eff0f1]">
          <Chrome />
          <div className="absolute bottom-0 left-[14px] h-[4px] w-[20px] rounded-full bg-[#0a74d0]" />
        </div>
        <Cell><Xbox /></Cell>
        <Cell><OfficeIcon c="#217346" dark="#0c4a29" letter="X"><path d="M17 6.500h8M17 10h8M17 13.500h8M17 17h8M17 20.500h8" stroke="#217346" strokeWidth="2" /><path d="M21 4v20" stroke="#fff" /></OfficeIcon></Cell>
        <Cell><OfficeIcon c="#2b579a" dark="#16376e" letter="W"><path d="M17 6.500h8M17 9.800h8M17 13h8M17 16.300h8M17 19.500h8" stroke="#2b579a" strokeWidth="1.600" /></OfficeIcon></Cell>
        <Cell><OfficeIcon c="#d24726" dark="#9c2d12" letter="P"><path d="M17 17.500h8M17 20.500h8" stroke="#d24726" strokeWidth="1.500" /><circle cx="20" cy="10.500" r="4.500" fill="#d24726" /><path d="M20 10.500V5.500M20 10.500h5" stroke="#fff" /></OfficeIcon></Cell>
        <Cell run><VSCode /></Cell>
        <Cell run><Teams /></Cell>
      </div>
      <Tray />
    </div>
  );
}

export default function App() {
  return (
    <div className="flex h-[1080px] w-[1920px] flex-col overflow-hidden bg-white font-['Open_Sans','Noto_Sans',sans-serif]">
      <TabStrip />
      <Toolbar />
      <EditorBar />
      <Editor />
      <Shelf />
      <Taskbar />
    </div>
  );
}
